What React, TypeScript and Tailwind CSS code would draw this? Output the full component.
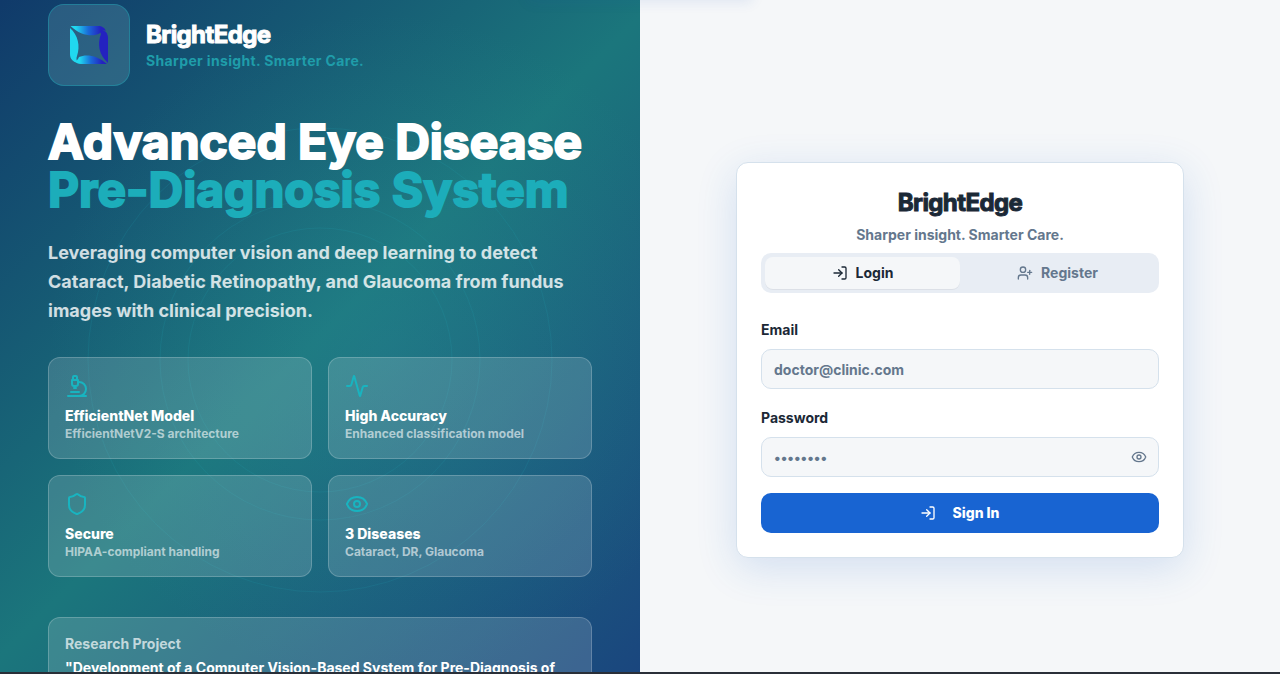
import React from "react";
import { Activity, Eye, LogIn, Microscope, Shield, UserPlus } from "lucide-react";

const features = [
  { icon: Microscope, title: "EfficientNet Model", text: "EfficientNetV2-S architecture" },
  { icon: Activity, title: "High Accuracy", text: "Enhanced classification model" },
  { icon: Shield, title: "Secure", text: "HIPAA-compliant handling" },
  { icon: Eye, title: "3 Diseases", text: "Cataract, DR, Glaucoma" },
];

function Logo() {
  return (
    <svg viewBox="0 0 40 40" className="h-10 w-10" aria-hidden="true">
      <defs>
        <linearGradient id="edge" x1="0" x2="1" y1="0" y2="0">
          <stop offset="0.15" stopColor="#20d8f0" />
          <stop offset="0.5" stopColor="#1a6ad8" />
          <stop offset="0.85" stopColor="#2422c0" />
        </linearGradient>
      </defs>
      <path d="M1.500 1H29C33 1 36 3 37 6C34 5 32 6 30.500 8.500C24 12 12 11 1.500 1Z" fill="url(#edge)" />
      <path d="M1 3C9 10 11.500 21 8 31C7 33 7.500 36 9 38C4 37 1 34 1 29Z" fill="#20d8f0" />
      <path d="M31 7C35 3 39 8 39 13V38C30 30 28 19 32 9Z" fill="#2422c0" />
      <path d="M38 39H12C9 39 7 38 6 36C8 36 9 34 10 32C17 29 28 30 38 39Z" fill="url(#edge)" />
    </svg>
  );
}

export default function App() {
  return (
    <div className="relative flex h-screen flex-col overflow-hidden bg-[#f5f7f9] font-['Inter',sans-serif] font-bold text-[#1b2836]">
      <div className="absolute bottom-full left-1/2 z-10 h-10 w-56 -translate-x-1/2 shadow-[0_2px_12px_rgba(30,80,180,0.1)]" />
      <div className="grid min-h-0 flex-1 grid-cols-2">
        <section className="relative overflow-hidden bg-[linear-gradient(135deg,#103a6a_0%,#1b767c_50%,#1a467e_100%)] px-12 pt-1 text-white">
          <div className="absolute inset-0 bg-[radial-gradient(circle_at_60%_52%,rgba(50,150,165,0.22),transparent_65%)]" />
          <svg className="absolute inset-0 h-full w-full" viewBox="0 0 640 672" fill="none" stroke="#22b4c2" strokeOpacity="0.13" aria-hidden="true">
            <circle cx="320" cy="360" r="232" />
            <circle cx="320" cy="360" r="160" />
            <circle cx="320" cy="360" r="132" />
          </svg>
          <div className="relative">
            <header className="flex items-center gap-4">
              <div className="flex size-[82px] shrink-0 items-center justify-center rounded-2xl border border-[#1ab0bd]/40 bg-[#8fcbd8]/20">
                <Logo />
              </div>
              <div>
                <p className="text-2xl tracking-tight [-webkit-text-stroke:1px]">BrightEdge</p>
                <p className="text-sm tracking-wide text-[#1f9daa]">Sharper insight. Smarter Care.</p>
              </div>
            </header>
            <h1 className="mt-8 text-5xl leading-none [-webkit-text-stroke:2px]">
              Advanced Eye Disease
              <span className="block text-[#1cadba]">Pre-Diagnosis System</span>
            </h1>
            <p className="mt-6 text-lg leading-[29px] text-white/80">
              Leveraging computer vision and deep learning to detect Cataract, Diabetic Retinopathy, and Glaucoma from fundus images with clinical precision.
            </p>
            <ul className="mt-8 grid grid-cols-2 gap-4">
              {features.map(({ icon: Icon, title, text }) => (
                <li key={title} className="rounded-xl border border-white/20 bg-white/15 p-4">
                  <Icon className="mb-2 size-6 text-[#18b4c0]" strokeWidth={2} />
                  <h2 className="text-sm leading-5 font-extrabold">{title}</h2>
                  <p className="text-xs leading-4 text-white/60">{text}</p>
                </li>
              ))}
            </ul>
            <div className="mt-10 rounded-xl border border-white/20 bg-white/15 p-4">
              <p className="text-sm text-white/70">Research Project</p>
              <p className="mt-1 text-sm">"Development of a Computer Vision-Based System for Pre-Diagnosis of Eye Diseases"</p>
            </div>
          </div>
        </section>

        <main className="flex items-center justify-center px-6 pt-12">
          <div className="w-full max-w-md rounded-xl border border-[#d5e1ec] bg-white p-6 shadow-[0_10px_40px_rgba(30,100,200,0.16)]">
            <h2 className="text-center text-2xl tracking-tight [-webkit-text-stroke:1px]">BrightEdge</h2>
            <p className="mt-1.5 mb-2 text-center text-sm text-[#64778d]">Sharper insight. Smarter Care.</p>
            <div role="tablist" className="grid grid-cols-2 rounded-[10px] bg-[#e8edf4] p-1 text-sm">
              <button role="tab" aria-selected="true" className="flex h-8 items-center justify-center gap-2 rounded-lg bg-[#f5f7f9] shadow-2xs">
                <LogIn size={16} /> Login
              </button>
              <button role="tab" aria-selected="false" className="flex h-8 items-center justify-center gap-2 text-[#64778d]">
                <UserPlus size={16} /> Register
              </button>
            </div>
            <form className="mt-7 text-sm">
              <label htmlFor="email" className="block leading-[18px]">Email</label>
              <input id="email" type="email" placeholder="doctor@clinic.com" className="mt-[10px] block h-10 w-full rounded-[10px] border border-[#d5e1ec] bg-[#f5f7f9] px-3 placeholder:text-[#64778d]" />
              <label htmlFor="password" className="mt-5 block leading-[18px]">Password</label>
              <div className="relative mt-[10px]">
                <input id="password" type="password" placeholder="••••••••" className="block h-10 w-full rounded-[10px] border border-[#d5e1ec] bg-[#f5f7f9] px-3 pr-10 placeholder:text-[#64778d]" />
                <button type="button" aria-label="Show password" className="absolute inset-y-0 right-3 text-[#64778d]">
                  <Eye size={16} />
                </button>
              </div>
              <button type="submit" className="mt-4 flex h-10 w-full items-center justify-center gap-4 rounded-[10px] bg-[#1864d2] font-extrabold text-white">
                <LogIn size={16} /> Sign In
              </button>
            </form>
          </div>
        </main>
      </div>
      <div className="h-0.5 shrink-0 bg-[#2a2f38]" />
    </div>
  );
}
